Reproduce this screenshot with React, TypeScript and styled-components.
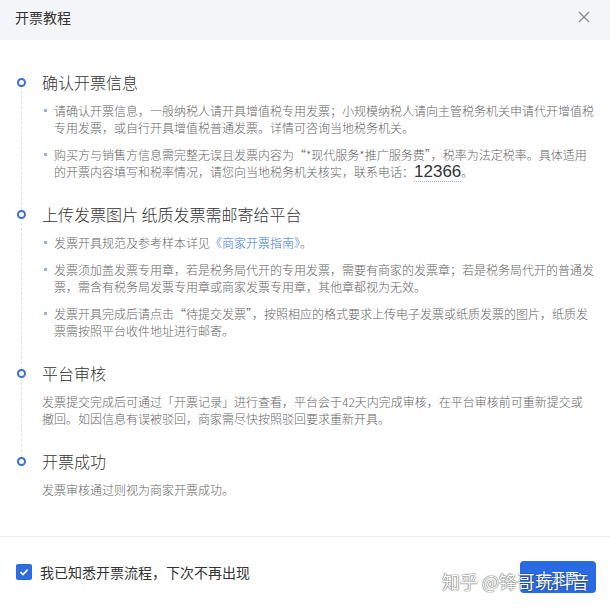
import React from 'react';
import styled, { createGlobalStyle } from 'styled-components';

const GlobalStyle = createGlobalStyle`
  html, body {
    margin: 0;
    padding: 0;
    background: #fff;
  }
  body {
    font-family: "Noto Sans CJK SC", "Noto Sans", sans-serif;
  }
`;

const Dialog = styled.div`
  width: 610px;
  height: 609px;
  display: flex;
  flex-direction: column;
  background: #fff;
  overflow: hidden;
`;

const Header = styled.div`
  height: 40px;
  padding: 0 18px 6px 15px;
  box-sizing: border-box;
  background: #f4f5f8;
  display: flex;
  align-items: center;
  justify-content: space-between;
`;

const HeaderTitle = styled.div`
  font-size: 14px;
  color: #333;
  line-height: 20px;
`;

const CloseButton = styled.button`
  width: 16px;
  height: 16px;
  padding: 0;
  border: none;
  background: none;
  display: flex;
  align-items: center;
  justify-content: center;
  cursor: pointer;
`;

const Body = styled.div`
  flex: 1;
  padding: 30px 0 0 14px;
`;

const Steps = styled.div`
  display: flex;
  flex-direction: column;
`;

const Step = styled.div`
  position: relative;
  padding: 0 0 22px 28px;

  &:last-child {
    padding-bottom: 0;
  }

  &:not(:last-child)::before {
    content: '';
    position: absolute;
    left: 7px;
    top: 16px;
    bottom: -8px;
    border-left: 1px dashed #dcdfe6;
  }
`;

const Dot = styled.span`
  position: absolute;
  left: 3px;
  top: 8px;
  width: 9px;
  height: 9px;
  box-sizing: border-box;
  border: 2px solid #3d6fd4;
  border-radius: 50%;
  background: #fff;
`;

const StepTitle = styled.div`
  font-size: 16px;
  font-weight: 300;
  line-height: 24px;
  color: #333;
  margin-bottom: 8px;
`;

const BulletList = styled.ul`
  list-style: none;
  margin: 0;
  padding: 0;
  display: flex;
  flex-direction: column;
  gap: 10px;
`;

const Bullet = styled.li`
  position: relative;
  padding-left: 12px;
  font-size: 12px;
  font-weight: 300;
  line-height: 17px;
  white-space: nowrap;
  color: #666;

  &::before {
    content: '';
    position: absolute;
    left: 2px;
    top: 7px;
    width: 3px;
    height: 3px;
    background: #9fb1d3;
  }
`;

const Text = styled.p`
  margin: 0;
  font-size: 12px;
  font-weight: 300;
  line-height: 17px;
  white-space: nowrap;
  color: #666;
`;

const Link = styled.a`
  color: #3a78d6;
  text-decoration: none;
`;

const Phone = styled.span`
  font-size: 17px;
  line-height: 1;
  color: #333;
  border-bottom: 1px dotted #9bb6e6;
  font-family: "Liberation Sans", "Noto Sans", sans-serif;
`;

const Footer = styled.div`
  position: relative;
  height: 73px;
  box-sizing: border-box;
  border-top: 1px solid #ececec;
  padding: 24px 14px 0 16px;
  display: flex;
  align-items: flex-start;
  justify-content: space-between;
`;

const CheckRow = styled.label`
  display: flex;
  align-items: center;
  gap: 8px;
  height: 18px;
  margin-top: 2px;
  font-size: 14px;
  color: #333;
  cursor: pointer;
`;

const CheckBox = styled.span`
  width: 16px;
  height: 16px;
  border-radius: 2px;
  background: #2c6be0;
  display: flex;
  align-items: center;
  justify-content: center;
`;

const PrimaryButton = styled.button`
  width: 76px;
  height: 32px;
  border: none;
  border-radius: 4px;
  background: #2a6be4;
  color: #fff;
  font-size: 14px;
  font-family: inherit;
  cursor: pointer;
`;

const Watermark = styled.div`
  position: absolute;
  left: 442px;
  top: 33px;
  font-size: 18px;
  line-height: 22px;
  color: #fff;
  white-space: nowrap;
  pointer-events: none;
  text-shadow:
    0 0 1px rgba(0, 0, 0, 0.55),
    0 0 1px rgba(0, 0, 0, 0.55),
    0 0 2px rgba(0, 0, 0, 0.25);
`;

function CloseIcon() {
  return (
    <svg width="12" height="12" viewBox="0 0 12 12">
      <path d="M1 1 L11 11 M11 1 L1 11" stroke="#8a8a8a" strokeWidth="1.2" fill="none" />
    </svg>
  );
}

function CheckIcon() {
  return (
    <svg width="12" height="12" viewBox="0 0 12 12">
      <path d="M2.5 6.2 L5 8.6 L9.6 3.6" stroke="#fff" strokeWidth="1.6" fill="none" />
    </svg>
  );
}

function App() {
  return (
    <Dialog>
      <GlobalStyle />
      <Header>
        <HeaderTitle>开票教程</HeaderTitle>
        <CloseButton aria-label="关闭">
          <CloseIcon />
        </CloseButton>
      </Header>

      <Body>
        <Steps>
          <Step>
            <Dot />
            <StepTitle>确认开票信息</StepTitle>
            <BulletList>
              <Bullet>
                请确认开票信息，一般纳税人请开具增值税专用发票；小规模纳税人请向主管税务机关申请代开增值税<br />
                专用发票，或自行开具增值税普通发票。详情可咨询当地税务机关。
              </Bullet>
              <Bullet>
                购买方与销售方信息需完整无误且发票内容为“*现代服务*推广服务费”，税率为法定税率。具体适用<br />
                的开票内容填写和税率情况，请您向当地税务机关核实，联系电话：<Phone>12366</Phone>。
              </Bullet>
            </BulletList>
          </Step>

          <Step>
            <Dot />
            <StepTitle>上传发票图片 纸质发票需邮寄给平台</StepTitle>
            <BulletList>
              <Bullet>
                发票开具规范及参考样本详见<Link href="#">《商家开票指南》</Link>。
              </Bullet>
              <Bullet>
                发票须加盖发票专用章，若是税务局代开的专用发票，需要有商家的发票章；若是税务局代开的普通发<br />
                票，需含有税务局发票专用章或商家发票专用章，其他章都视为无效。
              </Bullet>
              <Bullet>
                发票开具完成后请点击“待提交发票”，按照相应的格式要求上传电子发票或纸质发票的图片，纸质发<br />
                票需按照平台收件地址进行邮寄。
              </Bullet>
            </BulletList>
          </Step>

          <Step>
            <Dot />
            <StepTitle>平台审核</StepTitle>
            <Text>
              发票提交完成后可通过「开票记录」进行查看，平台会于42天内完成审核，在平台审核前可重新提交或<br />
              撤回。如因信息有误被驳回，商家需尽快按照驳回要求重新开具。
            </Text>
          </Step>

          <Step>
            <Dot />
            <StepTitle>开票成功</StepTitle>
            <Text>发票审核通过则视为商家开票成功。</Text>
          </Step>
        </Steps>
      </Body>

      <Footer>
        <CheckRow>
          <CheckBox>
            <CheckIcon />
          </CheckBox>
          我已知悉开票流程，下次不再出现
        </CheckRow>
        <PrimaryButton>去开票</PrimaryButton>
        <Watermark>知乎 @锋哥玩抖音</Watermark>
      </Footer>
    </Dialog>
  );
}

export default App;
